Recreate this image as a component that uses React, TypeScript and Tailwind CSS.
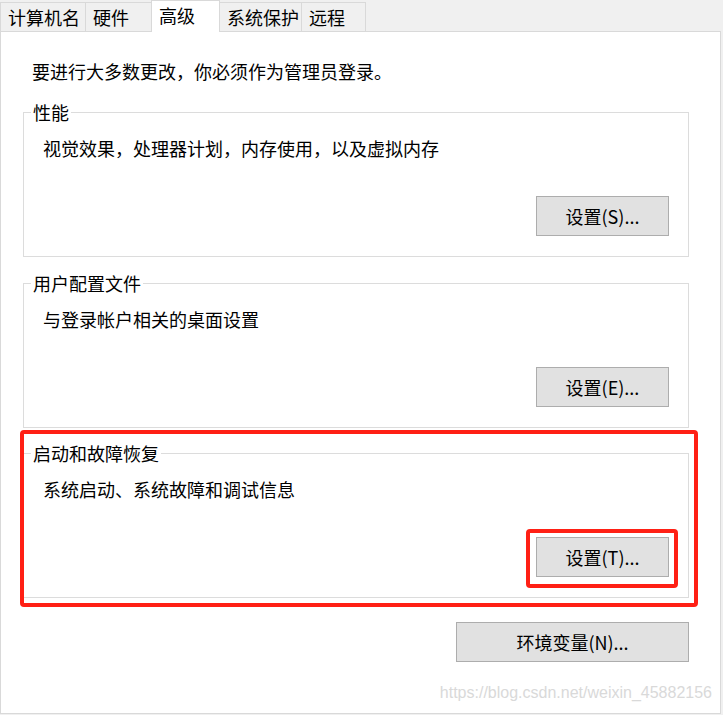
import React from "react";

const tabs = [
  { label: "计算机名", w: "w-[86px]" },
  { label: "硬件", w: "w-[67px]" },
  { label: "高级", w: "w-[69px]", active: true },
  { label: "系统保护", w: "w-[83px]" },
  { label: "远程", w: "w-[65px]" },
];

const font = "font-['Microsoft_YaHei','Noto_Sans_CJK_SC',sans-serif]";

function Btn({ label, w }: { label: string; w: string }) {
  return (
    <button
      className={`${w} h-[40px] border border-[#adadad] bg-[#e1e1e1] text-[18px] leading-6 text-black`}
    >
      {label}
    </button>
  );
}

function Group({
  title,
  text,
  button,
  className = "",
}: {
  title: string;
  text: string;
  button: string;
  className?: string;
}) {
  return (
    <fieldset className={`w-[666px] border border-[#dcdcdc] ${className}`}>
      <legend className="ml-[7px] px-[2px] text-[18px] leading-6">{title}</legend>
      <div className="flex flex-col pl-[19px] pr-[19px] pt-[12px] pb-[20px]">
        <p className="text-[18px] leading-6">{text}</p>
        <div className="mt-[36px] flex justify-end">
          <Btn label={button} w="w-[133px]" />
        </div>
      </div>
    </fieldset>
  );
}

export default function App() {
  return (
    <div className={`relative h-[715px] w-[723px] overflow-hidden bg-[#f0f0f0] text-black ${font}`}>
      {/* tab strip */}
      <div className="flex h-[31px] items-end">
        {tabs.map((t, i) => (
          <div
            key={t.label}
            className={`${t.w} ${i > 0 ? "-ml-px" : ""} border border-b-0 border-[#d9d9d9] pl-[7px] text-[18px] leading-6 ${
              t.active
                ? "relative z-10 -mb-px h-[32px] bg-white pt-[2px]"
                : "h-[29px] bg-[#f0f0f0] pt-[2px]"
            }`}
          >
            {t.label}
          </div>
        ))}
      </div>

      {/* panel */}
      <div className="flex h-[683px] w-[721px] flex-col border border-[#d9d9d9] bg-white pl-[22px] pt-[27px]">
        <p className="pl-[9px] text-[18px] leading-6">要进行大多数更改，你必须作为管理员登录。</p>

        <Group
          className="mt-[17px]"
          title="性能"
          text="视觉效果，处理器计划，内存使用，以及虚拟内存"
          button="设置(S)..."
        />
        <Group
          className="mt-[14px]"
          title="用户配置文件"
          text="与登录帐户相关的桌面设置"
          button="设置(E)..."
        />
        <Group
          className="mt-[13px]"
          title="启动和故障恢复"
          text="系统启动、系统故障和调试信息"
          button="设置(T)..."
        />

        <div className="mt-[24px] flex w-[666px] justify-end">
          <Btn label="环境变量(N)..." w="w-[233px]" />
        </div>
      </div>

      {/* red highlight marks */}
      <div className="absolute left-[20px] top-[430px] h-[177px] w-[678px] rounded-[4px] border-4 border-[#ff2015]" />
      <div className="absolute left-[526px] top-[529px] h-[59px] w-[152px] rounded-[4px] border-4 border-[#ff2015]" />

      {/* watermark */}
      <div className="absolute right-[11px] top-[683px] font-['Liberation_Sans',Arial,sans-serif] text-[16px] leading-5 text-[#d9d9d9]">
        https://blog.csdn.net/weixin_45882156
      </div>
    </div>
  );
}
